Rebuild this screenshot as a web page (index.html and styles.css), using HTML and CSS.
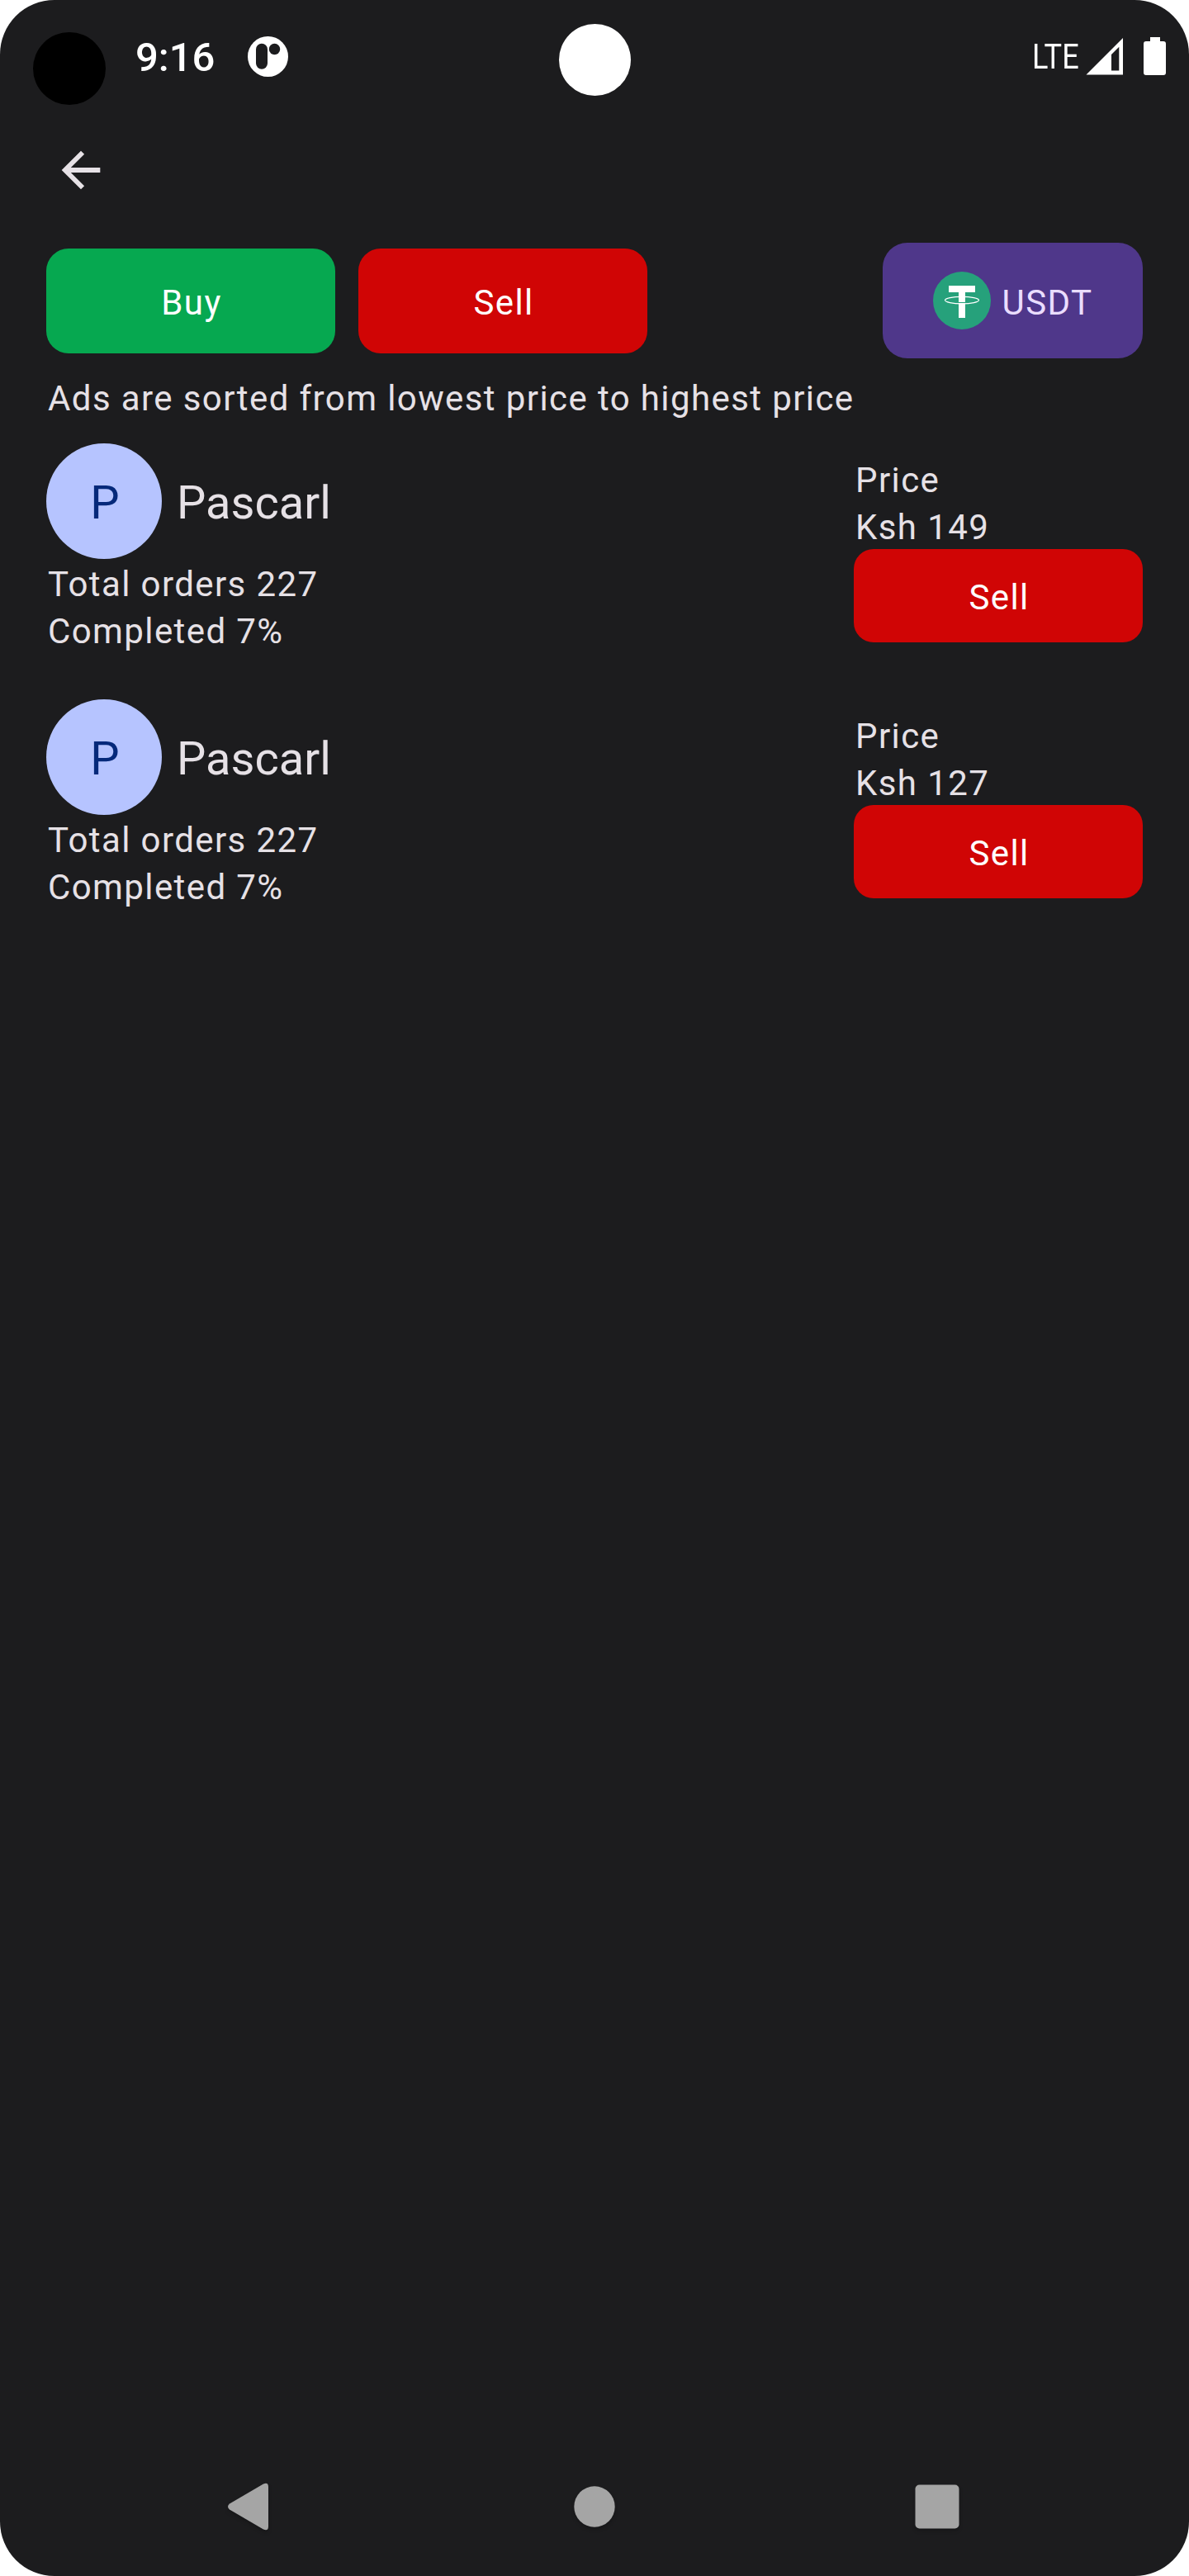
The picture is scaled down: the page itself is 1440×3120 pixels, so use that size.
FILE: index.html
```html
<!DOCTYPE html>
<html lang="en">
<head>
<meta charset="utf-8">
<title>P2P Ads</title>
<link rel="stylesheet" href="styles.css">
</head>
<body>
<div class="screen">
  <span class="camera"></span>
  <header class="status">
    <span class="dot"></span>
    <span class="time">9:16</span>
    <svg class="notif" viewBox="0 0 49 49"><circle cx="24.5" cy="24.5" r="24.5" fill="#fff"/><rect x="10" y="8.7" width="14" height="31" rx="7" fill="#1c1c1e"/><circle cx="32.5" cy="15.5" r="6.7" fill="#1c1c1e"/></svg>
    <span class="lte"><span class="lte-text">LTE</span></span>
    <svg class="signal" viewBox="0 0 45 45"><path fill="#fff" fill-rule="evenodd" d="M45 0V44.5H0.5ZM31 20V39.5H40.3V10.8Z"/></svg>
    <svg class="battery" viewBox="0 0 27 46"><path fill="#fff" d="M8 0H20V5H24Q27 5 27 8V43Q27 46 24 46H3Q0 46 0 43V8Q0 5 3 5H8Z"/></svg>
  </header>
  <nav class="toolbar">
    <svg class="back" viewBox="0 0 24 24"><path fill="#e6e1e6" d="M20 11H7.83l5.59-5.59L12 4l-8 8 8 8 1.41-1.41L7.83 13H20z"/></svg>
  </nav>
  <main class="content">
    <div class="filters">
      <button class="btn buy">Buy</button>
      <button class="btn sell">Sell</button>
      <button class="btn coin">
        <svg class="tether" viewBox="0 0 70 70"><circle cx="35" cy="35" r="35" fill="#26a17b"/><path fill="#fff" d="M19 17H51V25H39V56H31V25H19Z"/><path d="M31 37.5H39" stroke="#26a17b" stroke-width="1"/><ellipse cx="35" cy="34.6" rx="20.5" ry="4.3" fill="none" stroke="#fff" stroke-width="1.2"/></svg>
        <span class="coin-label">USDT</span>
      </button>
    </div>
    <p class="note">Ads are sorted from lowest price to highest price</p>
    <section class="ad">
      <div class="trader">
        <div class="who"><span class="avatar">P</span><span class="name">Pascarl</span></div>
        <p class="line">Total orders 227</p>
        <p class="line">Completed 7%</p>
      </div>
      <div class="offer">
        <p class="line">Price</p>
        <p class="line">Ksh 149</p>
        <button class="btn sell">Sell</button>
      </div>
    </section>
    <section class="ad">
      <div class="trader">
        <div class="who"><span class="avatar">P</span><span class="name">Pascarl</span></div>
        <p class="line">Total orders 227</p>
        <p class="line">Completed 7%</p>
      </div>
      <div class="offer">
        <p class="line">Price</p>
        <p class="line">Ksh 127</p>
        <button class="btn sell">Sell</button>
      </div>
    </section>
  </main>
  <footer class="navbar">
    <svg viewBox="0 0 60 60"><path fill="#a5a5a5" d="M7 26.5L48 2.5Q54 0 54 6V54Q54 60 48 57.5L7 33.5Q3 30 7 26.5Z"/></svg>
    <svg class="home" viewBox="0 0 60 60"><circle cx="30" cy="30" r="24.7" fill="#a5a5a5"/></svg>
    <svg viewBox="0 0 60 60"><rect x="3.5" y="3.5" width="53" height="53" rx="5" fill="#a5a5a5"/></svg>
  </footer>
</div>
</body>
</html>
```
FILE: styles.css
```css
* { box-sizing: border-box; margin: 0; padding: 0; }
body { background: #fff; font-family: Roboto, "Liberation Sans", sans-serif; }
svg { display: block; flex: none; }
.screen { position: relative; width: 1440px; height: 3120px; background: #1c1c1e; border-radius: 66px; overflow: hidden; display: flex; flex-direction: column; color: #e6e1e6; }
.camera { position: absolute; left: 677px; top: 29px; width: 87px; height: 87px; border-radius: 50%; background: #fff; }
.status { height: 144px; padding: 39px 28px 0 40px; display: flex; align-items: flex-start; color: #fff; }
.dot { width: 88px; height: 88px; border-radius: 50%; background: #000; }
.time { margin: 2px 0 0 36px; width: 136px; font-size: 49px; line-height: 58px; font-weight: 500; }
.notif { width: 49px; height: 49px; margin-top: 5px; }
.lte { margin: 4px 0 0 auto; width: 68px; font-size: 43px; line-height: 50px; }
.lte-text { display: inline-block; margin-left: 3px; transform: scaleX(.84); transform-origin: left; }
.signal { width: 45px; height: 45px; margin-top: 7px; }
.battery { width: 27px; height: 46px; margin: 6px 0 0 25px; }
.toolbar { height: 150px; padding: 27px 63px; }
.back { width: 70px; height: 70px; }
.content { flex: 1; padding: 0 56px; }
.btn { border: 0; color: #fff; font: 400 42px/56px Roboto, "Liberation Sans", sans-serif; letter-spacing: 1.4px; width: 350px; height: 127px; border-radius: 27px; padding: 5px 0 0 2px; }
.buy { background: #06a850; }
.sell { background: #d00505; }
.filters { display: flex; align-items: center; gap: 28px; height: 140px; }
.filters .btn { margin-top: 1px; }
.filters .coin { display: flex; align-items: center; justify-content: center; gap: 14px; margin: 0 0 0 auto; padding: 0; width: 315px; height: 140px; border-radius: 30px; background: #4f378a; color: #eaddff; }
.coin-label { padding-top: 5px; }
.tether { width: 70px; height: 70px; }
.note, .line { font-size: 42px; line-height: 57px; letter-spacing: 1.4px; padding-left: 2px; white-space: nowrap; }
.note { margin-top: 20px; }
.ad { display: flex; justify-content: space-between; height: 254px; margin-top: 26px; }
.ad + .ad { margin-top: 56px; }
.who { display: flex; align-items: center; gap: 18px; height: 140px; margin-bottom: 2px; }
.avatar { width: 140px; height: 140px; padding: 4px 0 0 2px; border-radius: 50%; background: #b6c4ff; color: #05297a; font-size: 56px; display: flex; align-items: center; justify-content: center; }
.name { padding-top: 4px; font-size: 56px; }
.offer { padding-top: 16px; width: 350px; }
.offer .btn { display: block; margin-top: -2px; height: 113px; padding-top: 4px; border-radius: 24px; }
.navbar { height: 168px; display: flex; justify-content: space-between; padding: 54px 275px 0 271px; }
.navbar svg { width: 60px; height: 60px; filter: drop-shadow(0 3px 2px rgba(0,0,0,.2)); }
.navbar .home { margin-left: 4px; }
```
